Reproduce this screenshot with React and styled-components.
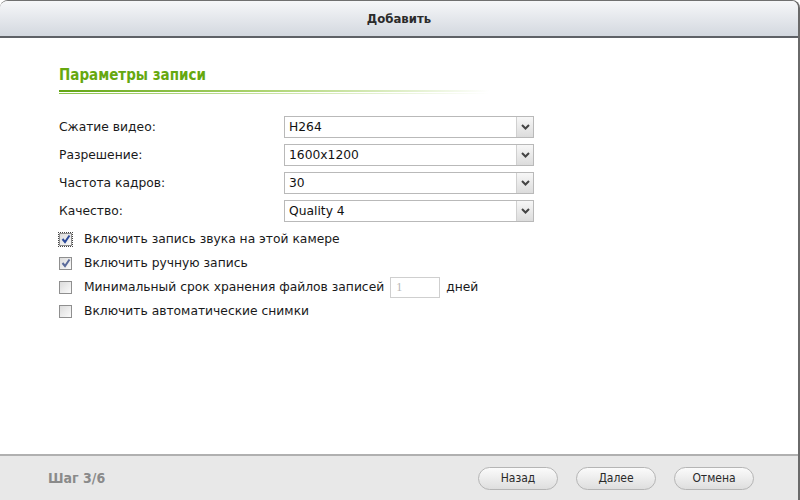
import React from 'react'
import styled, { createGlobalStyle } from 'styled-components'

const Global = createGlobalStyle`
  html, body {
    margin: 0;
    padding: 0;
    background: #ffffff;
  }
`

const Dialog = styled.div`
  width: 800px;
  height: 500px;
  box-sizing: border-box;
  display: flex;
  flex-direction: column;
  border-top: 1px solid #707070;
  border-right: 2px solid #6a6a6a;
  border-radius: 8px 8px 0 0;
  overflow: hidden;
  background: #fff;
  font-family: 'DejaVu Sans', Verdana, sans-serif;
`

const Header = styled.div`
  height: 35px;
  flex: none;
  display: flex;
  align-items: center;
  justify-content: center;
  background: linear-gradient(#f6f7f9, #d3d8df);
  border-bottom: 2px solid #5e6166;
  font-family: 'DejaVu Sans Condensed', 'DejaVu Sans', sans-serif;
  font-weight: bold;
  font-size: 13px;
  color: #2b2b2b;
`

const Body = styled.div`
  flex: 1;
  padding: 27px 0 0 59px;
`

const Heading = styled.div`
  font-family: 'DejaVu Sans Condensed', 'DejaVu Sans', sans-serif;
  font-weight: bold;
  font-size: 15px;
  color: #66a80f;
  line-height: 20px;
`

const Rule = styled.div`
  width: 430px;
  height: 2px;
  margin-top: 5px;
  background: linear-gradient(to right, #62a514 0%, #a9d26b 45%, rgba(255,255,255,0) 100%);
  &::after {
    content: '';
    display: block;
    position: relative;
    top: 3px;
    height: 1px;
    background: linear-gradient(to right, #8cc24a 0%, #c9e3a3 50%, rgba(255,255,255,0) 100%);
  }
`

const Form = styled.div`
  display: grid;
  grid-template-columns: 225px 250px;
  grid-auto-rows: 22px;
  row-gap: 6px;
  margin-top: 24px;
  align-items: center;
`

const Label = styled.div`
  font-size: 12.3px;
  color: #1a1a1a;
`

const Select = styled.div`
  height: 22px;
  box-sizing: border-box;
  border: 1px solid #b9b9b9;
  display: flex;
  align-items: center;
  font-size: 12.3px;
  color: #111;
  background: #fff;
`

const SelectText = styled.span`
  flex: 1;
  padding-left: 4px;
`

const Arrow = styled.span`
  width: 17px;
  height: 100%;
  box-sizing: border-box;
  border-left: 1px solid #d0d0d0;
  background: linear-gradient(#f7f7f7, #dcdcdc);
  display: flex;
  align-items: center;
  justify-content: center;
`

const Checks = styled.div`
  margin-top: 5px;
  display: flex;
  flex-direction: column;
`

const CheckRow = styled.div`
  height: 24px;
  display: flex;
  align-items: center;
  font-size: 12.3px;
  color: #1a1a1a;
`

const Box = styled.span`
  width: 13px;
  height: 13px;
  box-sizing: border-box;
  border: 1px solid #8f8f8f;
  background: linear-gradient(135deg, #dcdcdc, #fafafa);
  margin-right: 12px;
  display: flex;
  align-items: center;
  justify-content: center;
  outline: ${p => (p.focus ? '1px dotted #444' : 'none')};
  outline-offset: 0;
`

const DaysInput = styled.span`
  display: inline-flex;
  align-items: center;
  width: 50px;
  height: 21px;
  box-sizing: border-box;
  border: 1px solid #cfcfcf;
  margin: 0 6px 0 6px;
  padding-left: 5px;
  font-family: 'Liberation Serif', serif;
  font-size: 12px;
  color: #b5b5b5;
`

const Footer = styled.div`
  height: 44px;
  flex: none;
  display: flex;
  align-items: center;
  background: #e8e8e8;
  border-top: 2px solid #b0b0b0;
  padding: 0 44px 0 48px;
`

const Step = styled.div`
  flex: 1;
  font-family: 'DejaVu Sans Condensed', 'DejaVu Sans', sans-serif;
  font-weight: bold;
  font-size: 14px;
  color: #8a8a8a;
`

const Buttons = styled.div`
  display: flex;
  gap: 18px;
`

const Button = styled.div`
  width: 80px;
  height: 23px;
  box-sizing: border-box;
  border: 1px solid #b5b5b5;
  border-radius: 12px;
  background: linear-gradient(#fbfbfb, #dedede);
  display: flex;
  align-items: center;
  justify-content: center;
  font-family: 'DejaVu Sans Condensed', 'DejaVu Sans', sans-serif;
  font-size: 12px;
  color: #2a2a2a;
`

const Chevron = () => (
  <svg width="9" height="6" viewBox="0 0 9 6">
    <path d="M1 1 L4.5 4.5 L8 1" fill="none" stroke="#444" strokeWidth="2" />
  </svg>
)

const Tick = ({ color }) => (
  <svg width="10" height="10" viewBox="0 0 10 10">
    <path d="M1.5 5 L4 8 L8.5 1.5" fill="none" stroke={color} strokeWidth="2" />
  </svg>
)

const fields = [
  ['Сжатие видео:', 'H264'],
  ['Разрешение:', '1600x1200'],
  ['Частота кадров:', '30'],
  ['Качество:', 'Quality 4'],
]

export default function App() {
  return (
    <>
      <Global />
      <Dialog>
        <Header>Добавить</Header>
        <Body>
          <Heading>Параметры записи</Heading>
          <Rule />
          <Form>
            {fields.map(([label, value]) => (
              <React.Fragment key={label}>
                <Label>{label}</Label>
                <Select>
                  <SelectText>{value}</SelectText>
                  <Arrow><Chevron /></Arrow>
                </Select>
              </React.Fragment>
            ))}
          </Form>
          <Checks>
            <CheckRow>
              <Box focus><Tick color="#2c4a9a" /></Box>
              Включить запись звука на этой камере
            </CheckRow>
            <CheckRow>
              <Box><Tick color="#5a6a9a" /></Box>
              Включить ручную запись
            </CheckRow>
            <CheckRow>
              <Box />
              Минимальный срок хранения файлов записей
              <DaysInput>1</DaysInput>
              дней
            </CheckRow>
            <CheckRow>
              <Box />
              Включить автоматические снимки
            </CheckRow>
          </Checks>
        </Body>
        <Footer>
          <Step>Шаг 3/6</Step>
          <Buttons>
            <Button>Назад</Button>
            <Button>Далее</Button>
            <Button>Отмена</Button>
          </Buttons>
        </Footer>
      </Dialog>
    </>
  )
}
